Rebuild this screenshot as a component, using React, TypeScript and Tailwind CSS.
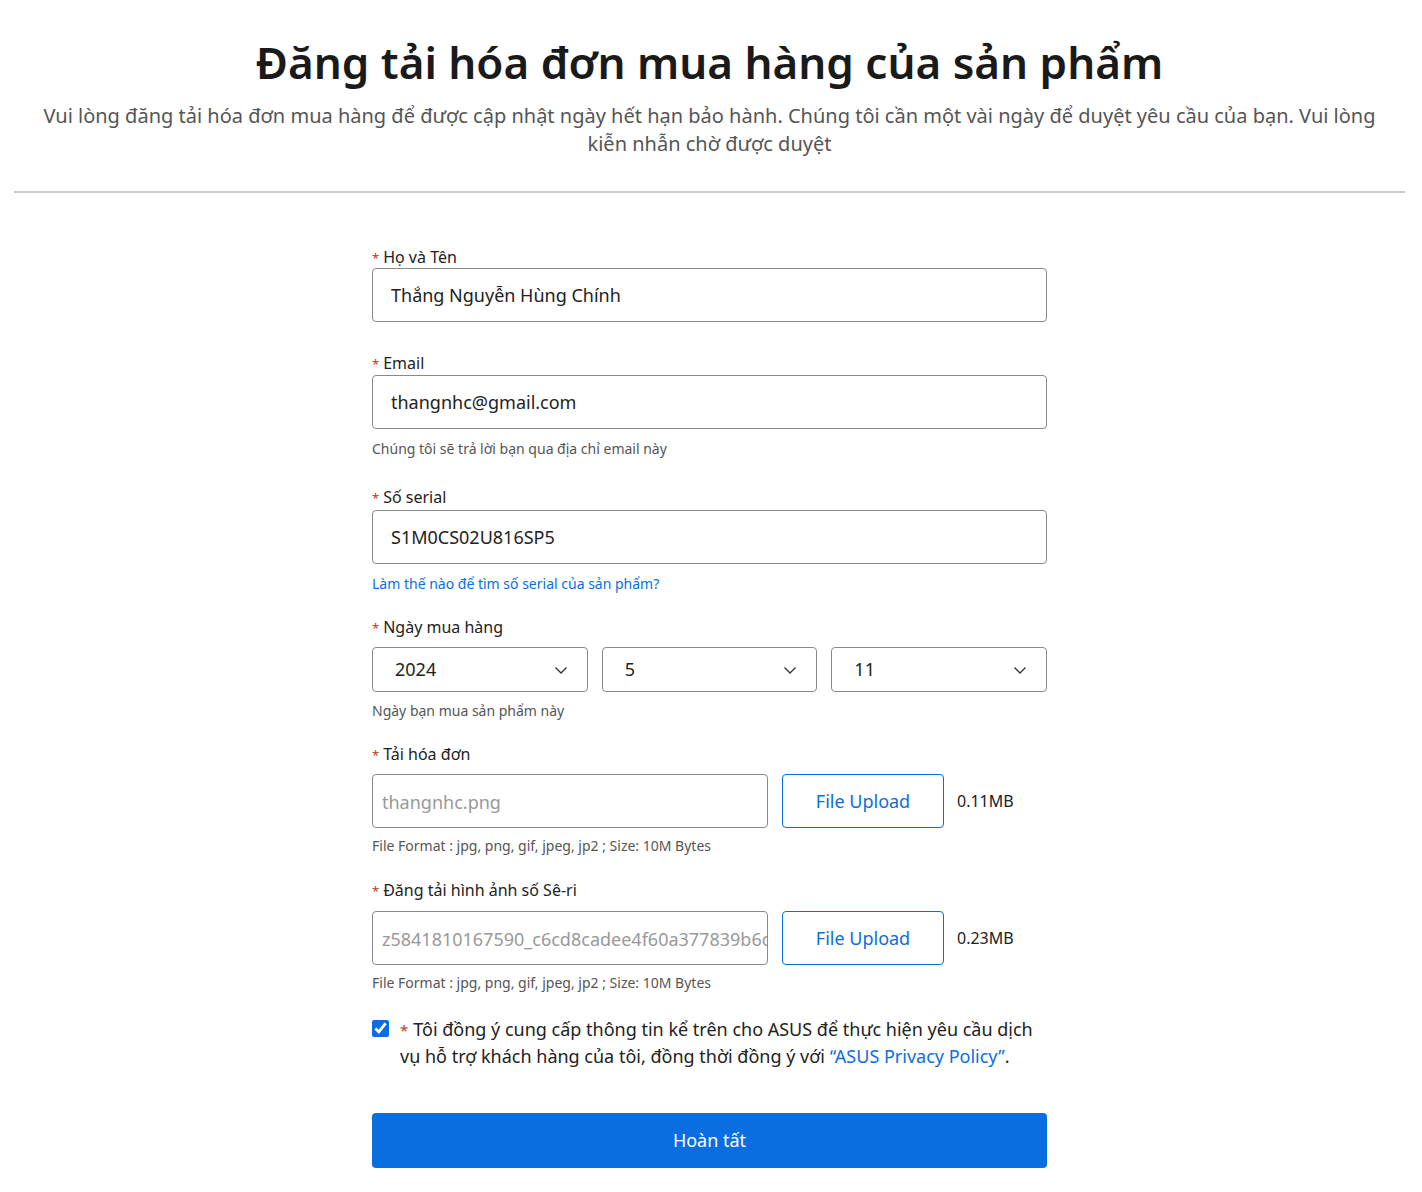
import { useState } from 'react';

function Label({ text }: { text: string }) {
  return (
    <div className="text-[16px] leading-[20px] text-[#222]">
      <span className="text-[#c0392b] text-[13px] mr-[4px]">*</span>
      {text}
    </div>
  );
}

function Chevron() {
  return (
    <svg width="16" height="16" viewBox="0 0 16 16" fill="none" stroke="#333" strokeWidth="1.3">
      <path d="M2.5 5.5 8 11l5.5-5.5" />
    </svg>
  );
}

function Select({ value }: { value: string }) {
  return (
    <div className="flex-1 h-[45px] border border-[#8a8a8a] rounded-[4px] flex items-center justify-between pl-[22px] pr-[18px] text-[18px] text-[#222]">
      <span>{value}</span>
      <Chevron />
    </div>
  );
}

function UploadRow({ file, size, top }: { file: string; size: string; top: string }) {
  return (
    <div className={`flex items-center ${top}`}>
      <div className="w-[396px] h-[54px] border border-[#8a8a8a] rounded-[4px] flex items-center pl-[9px] pt-[2px] text-[18px] text-[#999] overflow-hidden whitespace-nowrap">
        {file}
      </div>
      <button className="ml-[14px] w-[162px] h-[54px] border border-[#0a6ee0] rounded-[4px] text-[#0a6ee0] text-[18px]">
        File Upload
      </button>
      <span className="ml-[13px] text-[16px] text-[#222]">{size}</span>
    </div>
  );
}

export default function App() {
  const [name, setName] = useState('Thắng Nguyễn Hùng Chính');
  const [email, setEmail] = useState('thangnhc@gmail.com');
  const [serial, setSerial] = useState('S1M0CS02U816SP5');
  const [agree, setAgree] = useState(true);

  const inputCls =
    'w-full h-[54px] border border-[#8a8a8a] rounded-[4px] px-[18px] text-[18px] text-[#222] outline-none';

  return (
    <div className="min-h-screen bg-white font-['Noto_Sans',sans-serif]">
      <div className="pl-[14px] pr-[17px]">
        <div className="pt-[30px] pb-[33px] text-center border-b-2 border-[#cccccc]">
          <h1 className="text-[44px] leading-[64px] font-semibold text-[#1a1a1a]">
            Đăng tải hóa đơn mua hàng của sản phẩm
          </h1>
          <p className="mt-[8px] text-[20px] leading-[28px] text-[#555] px-[18px]">
            Vui lòng đăng tải hóa đơn mua hàng để được cập nhật ngày hết hạn bảo hành. Chúng tôi cần một vài ngày để duyệt yêu cầu của bạn. Vui lòng kiễn nhẫn chờ được duyệt
          </p>
        </div>
      </div>

      <div className="pr-[3px]">
        <form className="w-[675px] mx-auto pt-[54px] pb-[24px]" onSubmit={(e) => e.preventDefault()}>
          <Label text="Họ và Tên" />
          <input className={inputCls} value={name} onChange={(e) => setName(e.target.value)} />

          <div className="mt-[31px]">
            <Label text="Email" />
            <input className={`${inputCls} mt-[1px]`} value={email} onChange={(e) => setEmail(e.target.value)} />
            <p className="mt-[9px] text-[14px] text-[#555]">Chúng tôi sẽ trả lời bạn qua địa chỉ email này</p>
          </div>

          <div className="mt-[28px]">
            <Label text="Số serial" />
            <input className={`${inputCls} mt-[2px]`} value={serial} onChange={(e) => setSerial(e.target.value)} />
            <a href="#" className="block mt-[9px] text-[14px] text-[#0a6ee0]">
              Làm thế nào để tìm số serial của sản phẩm?
            </a>
          </div>

          <div className="mt-[23px]">
            <Label text="Ngày mua hàng" />
            <div className="flex gap-[14px] mt-[9px]">
              <Select value="2024" />
              <Select value="5" />
              <Select value="11" />
            </div>
            <p className="mt-[8px] text-[14px] text-[#555]">Ngày bạn mua sản phẩm này</p>
          </div>

          <div className="mt-[23px]">
            <Label text="Tải hóa đơn" />
            <UploadRow file="thangnhc.png" size="0.11MB" top="mt-[9px]" />
            <p className="mt-[7px] text-[14px] text-[#555]">File Format : jpg, png, gif, jpeg, jp2 ; Size: 10M Bytes</p>
          </div>

          <div className="mt-[24px]">
            <Label text="Đăng tải hình ảnh số Sê-ri" />
            <UploadRow file="z5841810167590_c6cd8cadee4f60a377839b6c" size="0.23MB" top="mt-[10px]" />
            <p className="mt-[7px] text-[14px] text-[#555]">File Format : jpg, png, gif, jpeg, jp2 ; Size: 10M Bytes</p>
          </div>

          <label className="flex items-start mt-[23px] cursor-pointer">
            <input
              type="checkbox"
              checked={agree}
              onChange={(e) => setAgree(e.target.checked)}
              className="w-[17px] h-[17px] mt-[4px] accent-[#0a6ee0] shrink-0"
            />
            <span className="ml-[11px] text-[18px] leading-[26px] text-[#222]">
              <span className="text-[#c0392b] text-[15px] mr-[5px]">*</span>
              Tôi đồng ý cung cấp thông tin kể trên cho ASUS để thực hiện yêu cầu dịch vụ hỗ trợ khách hàng của tôi, đồng thời đồng ý với{' '}
              <a href="#" className="text-[#0a6ee0]">“ASUS Privacy Policy”</a>.
            </span>
          </label>

          <button type="submit" className="w-full h-[55px] mt-[44px] bg-[#0a6ee0] rounded-[4px] text-white text-[18px]">
            Hoàn tất
          </button>
        </form>
      </div>
    </div>
  );
}
